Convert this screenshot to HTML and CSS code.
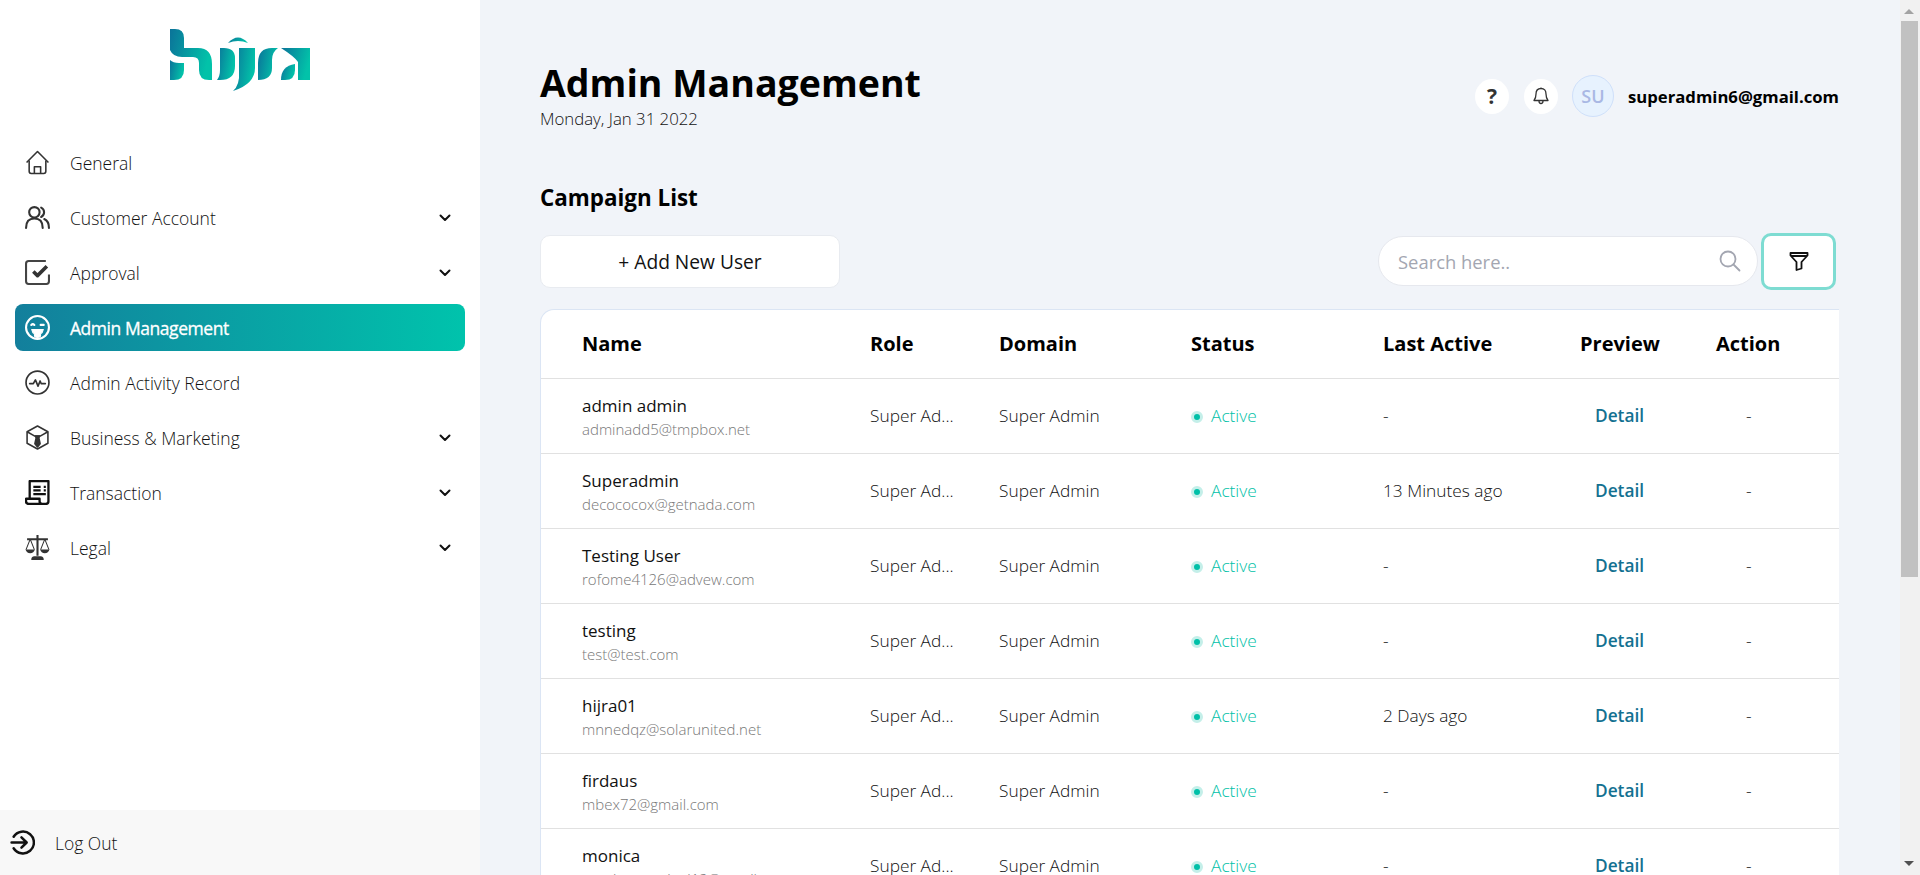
FILE: index.html
```html
<!DOCTYPE html>
<html lang="en">
<head>
    <meta charset="UTF-8">
    <meta name="viewport" content="width=device-width, initial-scale=1.0">
    <title>Admin Management</title>
    <link rel="stylesheet" href="styles.css">
</head>
<body>
    <aside class="sidebar">
        <div class="logo">
            <svg width="140" height="64" viewBox="0 0 140 64">
                <defs>
                    <linearGradient id="logoGrad" x1="0" y1="0" x2="1" y2="0.300">
                        <stop offset="0" stop-color="#0b7399"/>
                        <stop offset="1" stop-color="#02c2a9"/>
                    </linearGradient>
                </defs>
                <g fill="url(#logoGrad)">
                    <path d="M0 0h5q9 0 9 9v10h14q14 0 14 16v16h-3q-10 0-10-10v-7q0-6-6-6H12Q3 28 0 21z"/>
                    <path d="M0 31q3 3 9 3h5v7q0 10-10 10H0z"/>
                    <path d="M50 19h4q11 0 11 10v8q0 14-15 14h-3q3-4 3-10z"/>
                    <path d="M58 14q10-11 20 0-10-4-20 0z"/>
                    <path d="M69 19h16v20q0 16-22 23 7-6 6-20z"/>
                    <path d="M88 51V34q0-15 14-15h6q-6 4-6 12v8q0 12-14 12z"/>
                    <path d="M111 19h29v32h-12V33q-3-5-17-14z"/>
                    <path d="M111 51q0-14 14-16v6q0 10-10 10z"/>
                </g>
            </svg>
        </div>
        <nav class="menu">
            <a class="menu-item">
                <svg class="menu-icon" viewBox="0 0 24 24" fill="none" stroke="#333" stroke-width="1.500" stroke-linejoin="round"><path d="M1.500 12 12 1.500 22.500 12"/><path d="M4 10v10.500q0 2 2 2h12q2 0 2-2V10"/><path d="M9 22.500V16h6v6.500"/></svg>
                <span>General</span>
            </a>
            <a class="menu-item">
                <svg class="menu-icon" viewBox="0 0 24 24" fill="none" stroke="#333" stroke-width="2" stroke-linecap="round"><circle cx="9" cy="7" r="5"/><path d="M1 22q0-9 8-9t8 9"/><path d="M15.500 2.500a5 5 0 0 1 0 9M18.500 13.500q4.500 2 4.500 8.500"/></svg>
                <span>Customer Account</span>
                <svg class="chevron" viewBox="0 0 12 8" fill="none" stroke="#111" stroke-width="2" stroke-linecap="round" stroke-linejoin="round"><path d="M1.500 1.500 6 6l4.500-4.500"/></svg>
            </a>
            <a class="menu-item">
                <svg class="menu-icon" viewBox="0 0 24 24" fill="none" stroke="#444" stroke-width="2" stroke-linejoin="round"><path d="M20 1H3.500Q1 1 1 3.500v17Q1 23 3.500 23h17q2.500 0 2.500-2.500V14"/><path d="m8 11 4 4 9-9" stroke="#333" stroke-width="3.400"/></svg>
                <span>Approval</span>
                <svg class="chevron" viewBox="0 0 12 8" fill="none" stroke="#111" stroke-width="2" stroke-linecap="round" stroke-linejoin="round"><path d="M1.500 1.500 6 6l4.500-4.500"/></svg>
            </a>
            <a class="menu-item active">
                <svg class="menu-icon" viewBox="0 0 24 24" fill="none" stroke="#fff" stroke-width="2" stroke-linecap="round"><circle cx="12" cy="12" r="11"/><path d="M6 9.500q1.500-1.500 3 0M15 9.500h3"/><path d="M6.500 14h11q-.5 3-2.500 4v1.500q0 2-3 2t-3-2V18q-2-1-2.500-4z" fill="#fff" stroke-width="1"/></svg>
                <span>Admin Management</span>
            </a>
            <a class="menu-item">
                <svg class="menu-icon" viewBox="0 0 24 24" fill="none" stroke="#333" stroke-width="1.600" stroke-linejoin="round" stroke-linecap="round"><circle cx="12" cy="12" r="11"/><path d="M4.500 13h3.500l2-3.500 2.500 6 2-5 1 2.500h4"/></svg>
                <span>Admin Activity Record</span>
            </a>
            <a class="menu-item">
                <svg class="menu-icon" viewBox="0 0 24 24" fill="none" stroke="#333" stroke-width="1.500" stroke-linejoin="round"><path d="M12 1 22 6.500v11L12 23 2 17.500v-11z"/><path d="M2 6.500 9 10.500h6l7-4"/><path d="M10 10.500h4l-.7 2 1.200 5.500-2.500 3-2.500-3 1.200-5.500z" fill="#333"/></svg>
                <span>Business &amp; Marketing</span>
                <svg class="chevron" viewBox="0 0 12 8" fill="none" stroke="#111" stroke-width="2" stroke-linecap="round" stroke-linejoin="round"><path d="M1.500 1.500 6 6l4.500-4.500"/></svg>
            </a>
            <a class="menu-item">
                <svg class="menu-icon" viewBox="0 0 24 24" fill="none" stroke="#111" stroke-width="2.200" stroke-linejoin="round"><path d="M4.500 17V1h18v19.500q0 2.500-2.500 2.500H3.500Q1 23 1 20.500V18h13v2.500q0 2.500 2.500 2.500"/><path d="M8 6.500h7M8 10h7M18 6.500h2M18 10h2M8 13.500h12"/></svg>
                <span>Transaction</span>
                <svg class="chevron" viewBox="0 0 12 8" fill="none" stroke="#111" stroke-width="2" stroke-linecap="round" stroke-linejoin="round"><path d="M1.500 1.500 6 6l4.500-4.500"/></svg>
            </a>
            <a class="menu-item">
                <svg class="menu-icon" viewBox="0 0 24 24" fill="none" stroke="#333" stroke-width="1.500"><path d="M12 0v20M2 4h20" stroke-width="2"/><path d="M5 4 1 14M5 4l4 10M19 4l-4 10M19 4l4 10" stroke-width="1"/><path d="M.5 14h9q-1 3.500-4.500 3.500T.5 14zM14.500 14h9q-1 3.500-4.500 3.500T14.500 14z" fill="#333" stroke="none"/><path d="M6 24q0-3.500 3-3.500h6q3 0 3 3.500z" fill="#333" stroke="none"/></svg>
                <span>Legal</span>
                <svg class="chevron" viewBox="0 0 12 8" fill="none" stroke="#111" stroke-width="2" stroke-linecap="round" stroke-linejoin="round"><path d="M1.500 1.500 6 6l4.500-4.500"/></svg>
            </a>
        </nav>
        <a class="logout">
            <svg class="logout-icon" viewBox="0 0 24 24" fill="none" stroke="#111" stroke-width="2.400" stroke-linecap="round" stroke-linejoin="round"><path d="M3.500 6.500a10.500 10.500 0 1 1 0 11"/><path d="M1.500 12h14M11 7l5 5-5 5"/></svg>
            <span>Log Out</span>
        </a>
    </aside>

    <main class="content">
        <header class="topbar">
            <div>
                <h1>Admin Management</h1>
                <div class="date">Monday, Jan 31 2022</div>
            </div>
            <div class="user-box">
                <span class="round-btn question">?</span>
                <span class="round-btn">
                    <svg width="16" height="18" viewBox="0 0 16 18" fill="none" stroke="#333" stroke-width="1.300" stroke-linejoin="round"><path d="M8 1.500q-5 0-5 5.500 0 4-2 6.500h14q-2-2.500-2-6.500 0-5.500-5-5.500zM6 14q0 2.500 2 2.500t2-2.500M8 .5v1"/></svg>
                </span>
                <span class="avatar">SU</span>
                <span class="user-mail">superadmin6@gmail.com</span>
            </div>
        </header>

        <h2>Campaign List</h2>

        <div class="toolbar">
            <button class="add-btn">+ Add New User</button>
            <div class="toolbar-right">
                <div class="search">
                    <input type="text" placeholder="Search here..">
                    <svg width="22" height="22" viewBox="0 0 22 22" fill="none" stroke="#a3a6b1" stroke-width="1.800" stroke-linecap="round"><circle cx="9" cy="9" r="7.500"/><path d="m14.500 14.500 6 6"/></svg>
                </div>
                <button class="filter-btn">
                    <svg width="20" height="20" viewBox="0 0 20 20" fill="none" stroke="#111" stroke-width="1.800" stroke-linejoin="round"><path d="M1.500 2h17v2.500L12.500 11v6.500l-5 1.500v-8L1.500 4.500zM2 5h16"/></svg>
                </button>
            </div>
        </div>

        <div class="table-card">
            <table>
                <thead>
                    <tr>
                        <th class="col-name">Name</th>
                        <th class="col-role">Role</th>
                        <th class="col-domain">Domain</th>
                        <th class="col-status">Status</th>
                        <th class="col-last">Last Active</th>
                        <th class="col-preview">Preview</th>
                        <th class="col-action">Action</th>
                    </tr>
                </thead>
                <tbody>
                    <tr>
                        <td><div class="user-cell"><div class="user-name">admin admin</div><div class="user-email">adminadd5@tmpbox.net</div></div></td>
                        <td>Super Ad...</td>
                        <td>Super Admin</td>
                        <td><span class="dot"></span><span class="status">Active</span></td>
                        <td>-</td>
                        <td><a class="detail">Detail</a></td>
                        <td class="dash">-</td>
                    </tr>
                    <tr>
                        <td><div class="user-cell"><div class="user-name">Superadmin</div><div class="user-email">decococox@getnada.com</div></div></td>
                        <td>Super Ad...</td>
                        <td>Super Admin</td>
                        <td><span class="dot"></span><span class="status">Active</span></td>
                        <td>13 Minutes ago</td>
                        <td><a class="detail">Detail</a></td>
                        <td class="dash">-</td>
                    </tr>
                    <tr>
                        <td><div class="user-cell"><div class="user-name">Testing User</div><div class="user-email">rofome4126@advew.com</div></div></td>
                        <td>Super Ad...</td>
                        <td>Super Admin</td>
                        <td><span class="dot"></span><span class="status">Active</span></td>
                        <td>-</td>
                        <td><a class="detail">Detail</a></td>
                        <td class="dash">-</td>
                    </tr>
                    <tr>
                        <td><div class="user-cell"><div class="user-name">testing</div><div class="user-email">test@test.com</div></div></td>
                        <td>Super Ad...</td>
                        <td>Super Admin</td>
                        <td><span class="dot"></span><span class="status">Active</span></td>
                        <td>-</td>
                        <td><a class="detail">Detail</a></td>
                        <td class="dash">-</td>
                    </tr>
                    <tr>
                        <td><div class="user-cell"><div class="user-name">hijra01</div><div class="user-email">mnnedqz@solarunited.net</div></div></td>
                        <td>Super Ad...</td>
                        <td>Super Admin</td>
                        <td><span class="dot"></span><span class="status">Active</span></td>
                        <td>2 Days ago</td>
                        <td><a class="detail">Detail</a></td>
                        <td class="dash">-</td>
                    </tr>
                    <tr>
                        <td><div class="user-cell"><div class="user-name">firdaus</div><div class="user-email">mbex72@gmail.com</div></div></td>
                        <td>Super Ad...</td>
                        <td>Super Admin</td>
                        <td><span class="dot"></span><span class="status">Active</span></td>
                        <td>-</td>
                        <td><a class="detail">Detail</a></td>
                        <td class="dash">-</td>
                    </tr>
                    <tr>
                        <td><div class="user-cell"><div class="user-name">monica</div><div class="user-email">monicaoctaviani12@gmail.com</div></div></td>
                        <td>Super Ad...</td>
                        <td>Super Admin</td>
                        <td><span class="dot"></span><span class="status">Active</span></td>
                        <td>-</td>
                        <td><a class="detail">Detail</a></td>
                        <td class="dash">-</td>
                    </tr>
                </tbody>
            </table>
        </div>
    </main>

    <div class="scrollbar">
        <span class="arrow-up"></span>
        <div class="thumb"></div>
        <span class="arrow-down"></span>
    </div>
</body>
</html>
```

FILE: styles.css
```css
html, body {
    height: 100%;
}
body {
    margin: 0;
    display: flex;
    overflow: hidden;
    font-family: "Open Sans", sans-serif;
    color: #000;
    background: #f1f4f9;
}
.sidebar {
    width: 480px;
    height: 875px;
    flex-shrink: 0;
    display: flex;
    flex-direction: column;
    background: #fff;
}
.logo {
    height: 138px;
    padding-top: 29px;
    padding-left: 170px;
    box-sizing: border-box;
}
.menu {
    flex: 1;
    padding: 1px 15px 0;
}
.menu-item {
    height: 47px;
    margin-bottom: 8px;
    padding: 0 13px 0 10px;
    display: flex;
    align-items: center;
    border-radius: 8px;
    font-size: 17.500px;
    font-weight: 300;
    color: #111;
}
.menu-item span {
    flex: 1;
}
.menu-icon {
    width: 25px;
    height: 25px;
    margin-right: 20px;
    flex-shrink: 0;
}
.chevron {
    width: 12px;
    height: 8px;
    margin-right: 1px;
}
.menu-item.active {
    background: linear-gradient(90deg, #137f9c 0%, #00c3ac 100%);
    color: #fff;
    font-weight: 400;
    letter-spacing: -0.45px;
    -webkit-text-stroke: 0.3px #fff;
}
.logout {
    height: 65px;
    padding-left: 10px;
    display: flex;
    align-items: center;
    background: #f8f8f8;
    font-size: 17.500px;
    font-weight: 300;
    color: #111;
}
.logout-icon {
    width: 25px;
    height: 25px;
    margin-right: 20px;
}
.content {
    flex: 1;
    min-width: 0;
    height: 875px;
    box-sizing: border-box;
    padding: 0 61px 0 60px;
    overflow: hidden;
}
.scrollbar {
    width: 20px;
    height: 875px;
    flex-shrink: 0;
    display: flex;
    flex-direction: column;
    background: #f1f1f1;
}
.arrow-up, .arrow-down {
    width: 0;
    height: 0;
    margin-left: 4px;
    border-left: 5px solid transparent;
    border-right: 5px solid transparent;
}
.arrow-up {
    margin-top: 9px;
    border-bottom: 5px solid #a3a3a3;
}
.arrow-down {
    margin-top: auto;
    margin-bottom: 9px;
    border-top: 5px solid #505050;
}
.thumb {
    height: 556px;
    margin: 7px 2px 0 1px;
    background: #c1c1c1;
}
.topbar {
    display: flex;
    justify-content: space-between;
    padding-top: 57px;
    height: 160px;
    box-sizing: border-box;
}
h1 {
    margin: 0;
    font-size: 37.500px;
    line-height: 52px;
    font-weight: 700;
}
.date {
    font-size: 16.800px;
    font-weight: 300;
    line-height: 20px;
    color: #111;
}
.user-box {
    display: flex;
    align-items: center;
    height: 50px;
    margin-top: 14px;
}
.round-btn {
    width: 34px;
    height: 35px;
    margin-right: 16px;
    display: flex;
    align-items: center;
    justify-content: center;
    border-radius: 50%;
    background: #fff;
}
.question {
    margin-right: 15px;
    font-size: 21px;
    font-weight: 700;
    color: #333;
}
.avatar {
    width: 40px;
    height: 40px;
    margin-right: 14px;
    margin-left: -2px;
    display: flex;
    align-items: center;
    justify-content: center;
    border: 1px solid #cfe0fa;
    border-radius: 50%;
    background: #e7f2fe;
    color: #a9b8e4;
    font-size: 18px;
    font-weight: 600;
}
.user-mail {
    font-size: 16.700px;
    font-weight: 700;
}
h2 {
    margin: 16px 0 0;
    font-size: 22.400px;
    line-height: 44px;
    font-weight: 700;
}
.toolbar {
    display: flex;
    justify-content: space-between;
    align-items: center;
    margin-top: 13px;
    height: 56px;
}
.add-btn {
    width: 300px;
    height: 53px;
    border: 1px solid #e8ebf0;
    border-radius: 10px;
    background: #fff;
    font-family: inherit;
    font-size: 19.200px;
    color: #111;
}
.toolbar-right {
    display: flex;
    align-items: center;
    margin-right: 3px;
    gap: 3px;
}
.search {
    width: 380px;
    height: 50px;
    padding: 0 16px 0 19px;
    box-sizing: border-box;
    display: flex;
    align-items: center;
    border: 1px solid #e6e8ee;
    border-radius: 25px;
    background: #fff;
}
.search input {
    flex: 1;
    min-width: 0;
    padding: 0;
    border: none;
    outline: none;
    font-family: inherit;
    font-size: 18.400px;
    background: transparent;
}
.search input::placeholder {
    color: #a3a6b1;
}
.filter-btn {
    width: 75px;
    height: 57px;
    display: flex;
    align-items: center;
    justify-content: center;
    border: 3px solid #7edcd2;
    border-radius: 10px;
    background: #fff;
}
.table-card {
    margin-top: 20px;
    border: 1px solid #dbe5f4;
    border-right: none;
    border-bottom: none;
    border-radius: 14px 0 0 0;
    background: #fff;
}
table {
    width: 100%;
    border-collapse: collapse;
    table-layout: fixed;
}
th {
    height: 66px;
    padding: 0 0 2px;
    box-sizing: border-box;
    text-align: left;
    font-size: 20px;
    font-weight: 700;
}
td {
    height: 75px;
    padding: 0 0 2px;
    box-sizing: border-box;
    border-top: 1px solid #e1e1e1;
    font-size: 17.300px;
    font-weight: 300;
    color: #111;
}
.col-name { width: 288px; padding-left: 41px; box-sizing: content-box; }
.col-role { width: 129px; }
.col-domain { width: 192px; }
.col-status { width: 192px; }
.col-last { width: 197px; }
.col-preview { width: 136px; }
td:first-child {
    padding-left: 41px;
}
.user-cell {
    padding-top: 3px;
}
.user-name {
    font-size: 17px;
    font-weight: 400;
    line-height: 25px;
}
.user-email {
    font-size: 15px;
    font-weight: 300;
    line-height: 23px;
    color: #777;
}
.dot {
    display: inline-block;
    width: 6px;
    height: 6px;
    margin-right: 8px;
    vertical-align: middle;
    border: 3px solid #c4efe9;
    border-radius: 50%;
    background: #00c0a8;
}
.status {
    color: #00bfa8;
}
.detail {
    margin-left: 15px;
    color: #137191;
    font-weight: 600;
}
.dash {
    padding-left: 30px;
}
```
